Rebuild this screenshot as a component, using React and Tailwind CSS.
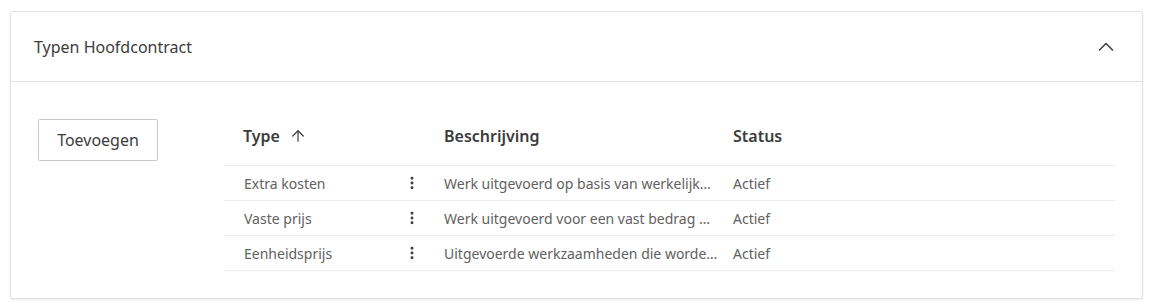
import { ArrowUp, EllipsisVertical } from 'lucide-react';

const rows = [
  {
    type: 'Extra kosten',
    description: 'Werk uitgevoerd op basis van werkelijk…',
    status: 'Actief',
  },
  {
    type: 'Vaste prijs',
    description: 'Werk uitgevoerd voor een vast bedrag …',
    status: 'Actief',
  },
  {
    type: 'Eenheidsprijs',
    description: 'Uitgevoerde werkzaamheden die worde…',
    status: 'Actief',
  },
];

const font = { fontFamily: '"Noto Sans", "Open Sans", sans-serif' };

function App() {
  return (
    <div className="min-h-screen bg-white pt-[11px] pl-[10px]" style={font}>
      <div className="w-[1133px] rounded-[3px] border border-[#e2e2e2] bg-white shadow-[0_1px_2px_rgba(0,0,0,0.08)]">
        <div className="flex h-[70px] items-center justify-between border-b border-[#e2e2e2] pl-[23px] pr-[28px]">
          <span className="text-[16px] text-[#3c3c3c]">Typen Hoofdcontract</span>
          <svg
            className="h-[16px] w-[16px] text-[#3c3c3c]"
            viewBox="0 0 16 16"
            fill="none"
            stroke="currentColor"
            strokeWidth="1.5"
            strokeLinecap="round"
            strokeLinejoin="round"
          >
            <path d="M1.5 11 L8 4.5 L14.5 11" />
          </svg>
        </div>

        <div className="flex pt-[37px] pb-[27px] pl-[27px] pr-[27px]">
          <div className="w-[186px] shrink-0">
            <button className="h-[42px] w-[120px] rounded-[2px] border border-[#c8c8c8] bg-white text-[16px] text-[#3c3c3c]">
              Toevoegen
            </button>
          </div>

          <div className="flex-1">
            <div className="grid h-[47px] grid-cols-[171px_33px_289px_1fr] items-center border-b border-[#ececec] pb-[12px] text-[16px] font-semibold text-[#3c3c3c]">
              <div className="flex items-center gap-[9px] pl-[19px]">
                Type
                <ArrowUp className="h-[18px] w-[18px]" strokeWidth={1.6} />
              </div>
              <div />
              <div className="pl-[16px]">Beschrijving</div>
              <div className="pl-[16px]">Status</div>
            </div>
            {rows.map((row) => (
              <div
                key={row.type}
                className="grid h-[35px] grid-cols-[171px_33px_289px_1fr] items-center border-b border-[#ececec] text-[14px] text-[#616161]"
              >
                <div className="pl-[20px]">{row.type}</div>
                <div className="flex justify-center text-[#3c3c3c]">
                  <EllipsisVertical className="h-[16px] w-[16px]" strokeWidth={2.4} />
                </div>
                <div className="overflow-hidden whitespace-nowrap pl-[16px] text-clip">{row.description}</div>
                <div className="pl-[16px]">{row.status}</div>
              </div>
            ))}
          </div>
        </div>
      </div>
    </div>
  );
}

export default App;
